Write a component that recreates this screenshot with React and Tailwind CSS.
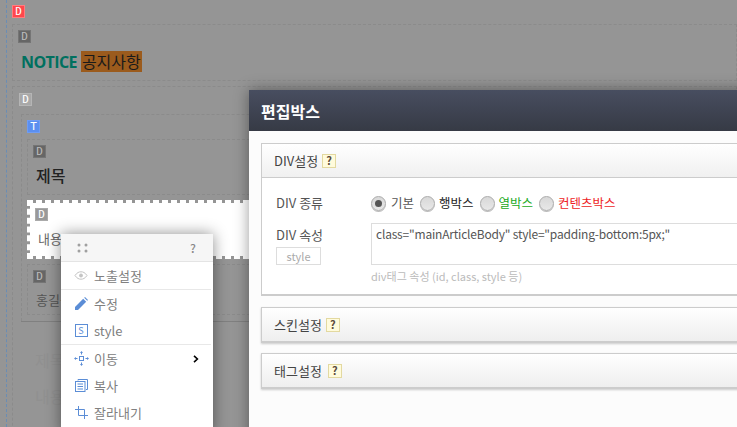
import React from 'react';

const KR = "font-['Noto_Sans_CJK_KR','Noto_Sans',sans-serif]";

function Badge({ color = 'bg-[#666666] border-[#757575] text-[#bbbbbb]', label = 'D' }) {
  return (
    <div className={`w-[13px] h-[13px] border flex items-center justify-center text-[11px] leading-none font-['DejaVu_Sans_Mono',monospace] ${color}`}>
      {label}
    </div>
  );
}

function Help() {
  return (
    <span className="inline-flex w-[14px] h-[14px] items-center justify-center border border-[#e3d9a0] bg-[#fffbdc] text-[11px] font-bold leading-none text-[#5a4a3a]">?</span>
  );
}

function Radio({ checked }) {
  return (
    <span className="w-[15px] h-[15px] rounded-full border border-[#ababab] bg-gradient-to-b from-[#d8d8d8] to-[#e8e8e8] shadow-[0_1px_0_#bbbbbb] flex items-center justify-center shrink-0">
      {checked && <span className="w-[7px] h-[7px] rounded-full bg-[#555555]" />}
    </span>
  );
}

function Section({ title, gap }) {
  return (
    <div className="h-[36px] mb-[10px] border border-[#cccccc] border-b-[2px] bg-gradient-to-b from-white to-[#eeeeee] shadow-[0_1px_2px_rgba(0,0,0,0.2)] flex items-center pl-[12px]">
      <span className="text-[13px] text-[#444444]">{title}</span>
      <span className={`flex ${gap}`}><Help /></span>
    </div>
  );
}

function MenuItem({ icon, label, arrow }) {
  return (
    <div className="h-[27px] flex items-center pl-[13px] pr-[14px] text-[13px] text-[#808080]">
      <span className="w-[14px] flex justify-center mr-[6px]">{icon}</span>
      <span className="flex-1">{label}</span>
      {arrow && (
        <svg width="6" height="8" viewBox="0 0 6 8" fill="none" stroke="#000000" strokeWidth="1.6"><path d="M1 .8L4.4 4 1 7.2" /></svg>
      )}
    </div>
  );
}

const blue = '#5b8dd6';

const EyeIcon = (
  <svg width="14" height="9" viewBox="0 0 14 9" fill="none" stroke="#c4c4c4"><path d="M1 4.5C3 1.5 5 .8 7 .8s4 .7 6 3.7C11 7.5 9 8.2 7 8.2s-4-.7-6-3.7z" /><circle cx="7" cy="4.5" r="1.5" fill="#c4c4c4" /></svg>
);
const PencilIcon = (
  <svg width="13" height="13" viewBox="0 0 13 13"><path d="M0 10l8.2-8.2 3 3L3 13H0z" fill={blue} /><path d="M9.2.8L10 0l3 3-.8.8z" fill={blue} /></svg>
);
const StyleIcon = (
  <span className="w-[13px] h-[13px] shrink-0 border border-[#5b8dd6] text-[#5b8dd6] text-[9px] leading-none flex items-center justify-center">S</span>
);
const MoveIcon = (
  <svg width="15" height="15" viewBox="0 0 15 15" fill="none" stroke={blue} className="shrink-0">
    <rect x="5.5" y="5.5" width="4" height="4" />
    <path d="M7.5 1v2.5M7.5 11.5V14M1 7.5h2.5M11.5 7.5H14" />
    <path d="M7.5 0l1.5 2H6zM7.5 15L6 13h3zM0 7.5L2 6v3zM15 7.5L13 9V6z" fill={blue} stroke="none" />
  </svg>
);
const CopyIcon = (
  <svg width="13" height="13" viewBox="0 0 13 13" fill="none" stroke={blue}>
    <path d="M3 1.5V.5h9.5v10h-1.5" />
    <rect x=".5" y="2.5" width="9.5" height="10" fill="white" />
    <path d="M2.5 5h5.5M2.5 7.5h5.5M2.5 10h5.5" />
  </svg>
);
const CropIcon = (
  <svg width="13" height="13" viewBox="0 0 13 13" fill="none" stroke={blue}>
    <path d="M3.5 0v9.5H13M0 3.5h9.5V13" />
  </svg>
);

function Line() {
  return <div className="h-px bg-[#e8e8e8] mr-[2px]" />;
}

export default function App() {
  return (
    <div className={`relative w-[737px] h-[427px] overflow-hidden bg-[#959595] ${KR}`}>
      {/* page behind the dim layer */}
      <div className="h-full ml-[6px] pl-[5px] pt-[5px] border-l border-dashed border-[#6a8db5]">
        <Badge color="bg-[#ff474c] border-[#ff7c7f] text-white" />
        <div className="mt-[6px] h-[57px] border border-dashed border-[#8b8b8b] pl-[5px] pt-[5px]">
          <Badge />
          <div className="mt-[8px] pl-[3px] flex items-center h-[21px]">
            <span className="font-['Open_Sans',sans-serif] font-bold text-[16px] text-[#00705f] tracking-[-0.6px]">NOTICE</span>
            <span className="ml-[4px] bg-[#9b5b1d] text-[16px] leading-[21px] text-[#1a1a1a] px-px">공지사항</span>
          </div>
        </div>
        <div className="mt-[5px] h-[400px] border border-dashed border-[#8b8b8b] pl-[6px] pt-[6px]">
          <Badge color="bg-[#a8a8a8] border-[#b5b5b5] text-white" />
          <div className="mt-[8px] ml-[2px] h-[207px] border border-b-0 border-dashed border-[#8b8b8b] pl-[5px] pt-[5px]">
            <Badge color="bg-[#5b8ff0] border-[#6f9cf2] text-white" label="T" />
            <div className="mt-[6px] h-[56px] border border-dashed border-[#8b8b8b] pl-[5px] pt-[5px]">
              <Badge />
              <div className="mt-[6px] pl-[3px] text-[16px] leading-[22px] font-medium text-[#222222]">제목</div>
            </div>
            <div className="mt-[5px] h-[59px] w-[240px] border-[3px] border-dashed border-white bg-white bg-clip-padding pl-[5px] pt-[5px]">
              <Badge color="bg-[#999999] border-[#aaaaaa] text-white" />
              <div className="mt-[8px] pl-[3px] text-[13px] leading-[20px] text-[#666666]">내용</div>
            </div>
            <div className="mt-[5px] h-[51px] border border-dashed border-[#8b8b8b] pl-[5px] pt-[5px]">
              <Badge />
              <div className="mt-[7px] pl-[3px] text-[13px] leading-[20px] text-[#555555]">홍길동</div>
            </div>
          </div>
          <div className="ml-[2px] h-px bg-[#808080] w-[300px]" />
          <div className="ml-[16px] mt-[27px] text-[16px] leading-[22px] text-[#909090]">제목</div>
          <div className="ml-[16px] mt-[14px] text-[16px] leading-[22px] text-[#909090]">내용</div>
        </div>
      </div>

      {/* edit dialog */}
      <div className="absolute left-[249px] top-[90px] w-[600px] h-[400px] bg-[#fcfcfc] shadow-[0_0_14px_rgba(0,0,0,0.4)]">
        <div className="h-[41px] bg-gradient-to-b from-[#484e60] to-[#363a45] flex items-center pl-[12px] text-[16px] font-bold text-white">편집박스</div>
        <div className="pt-[12px] pl-[12px]">
          <div className="mb-[11px] border border-[#cccccc] border-b-[2px] bg-white">
            <div className="h-[34px] border-b border-[#cccccc] bg-gradient-to-b from-white to-[#f0f0f0] flex items-center pl-[12px]">
              <span className="text-[13px] text-[#444444]">DIV설정</span>
              <span className="flex ml-[4px]"><Help /></span>
            </div>
            <div className="pt-[15px] pb-[10px] pl-[14px]">
              <div className="flex items-center h-[20px]">
                <span className="w-[95px] text-[13px] text-[#555555]">DIV 종류</span>
                <div className="flex items-center text-[12.5px]">
                  <Radio checked />
                  <span className="ml-[5px] mr-[6px] text-[#555555]">기본</span>
                  <Radio />
                  <span className="ml-[4px] mr-[6px] text-[#222222]">행박스</span>
                  <Radio />
                  <span className="ml-[4px] mr-[6px] text-[#22aa22]">열박스</span>
                  <Radio />
                  <span className="ml-[4px] text-[#ee1c25]">컨텐츠박스</span>
                </div>
              </div>
              <div className="flex mt-[10px]">
                <div className="w-[95px] pt-[2px]">
                  <div className="text-[13px] leading-[20px] text-[#555555]">DIV 속성</div>
                  <div className="mt-[2px] w-[45px] h-[18px] border border-[#dddddd] flex items-center justify-center text-[11px] text-[#aaaaaa]">style</div>
                </div>
                <div>
                  <div className="w-[420px] h-[42px] border border-[#dddddd] px-[4px] py-[2px] text-[12px] leading-[16px] tracking-[-0.2px] text-[#555555] whitespace-nowrap">class="mainArticleBody" style="padding-bottom:5px;"</div>
                  <div className="mt-[3px] text-[11px] leading-[16px] text-[#bbbbbb]">div태그 속성 (id, class, style 등)</div>
                </div>
              </div>
            </div>
          </div>
          <Section title="스킨설정" gap="ml-[4px]" />
          <Section title="태그설정" gap="ml-[6px]" />
        </div>
      </div>

      {/* context menu */}
      <div className="absolute left-[61px] top-[234px] w-[152px] h-[200px] bg-white shadow-[0_0_14px_rgba(0,0,0,0.45)]">
        <div className="h-[28px] bg-[#f6f6f6] border-b border-[#e4e4e4] flex items-center justify-between pl-[16px] pr-[17px]">
          <svg width="11" height="10" viewBox="0 0 11 10" fill="#a0a0a0"><circle cx="2" cy="2" r="1.5" /><circle cx="9" cy="2" r="1.5" /><circle cx="2" cy="8" r="1.5" /><circle cx="9" cy="8" r="1.5" /></svg>
          <span className="text-[12px] font-medium text-[#888888]">?</span>
        </div>
        <MenuItem icon={EyeIcon} label="노출설정" />
        <Line />
        <MenuItem icon={PencilIcon} label="수정" />
        <MenuItem icon={StyleIcon} label="style" />
        <Line />
        <MenuItem icon={MoveIcon} label="이동" arrow />
        <MenuItem icon={CopyIcon} label="복사" />
        <MenuItem icon={CropIcon} label="잘라내기" />
      </div>
    </div>
  );
}
